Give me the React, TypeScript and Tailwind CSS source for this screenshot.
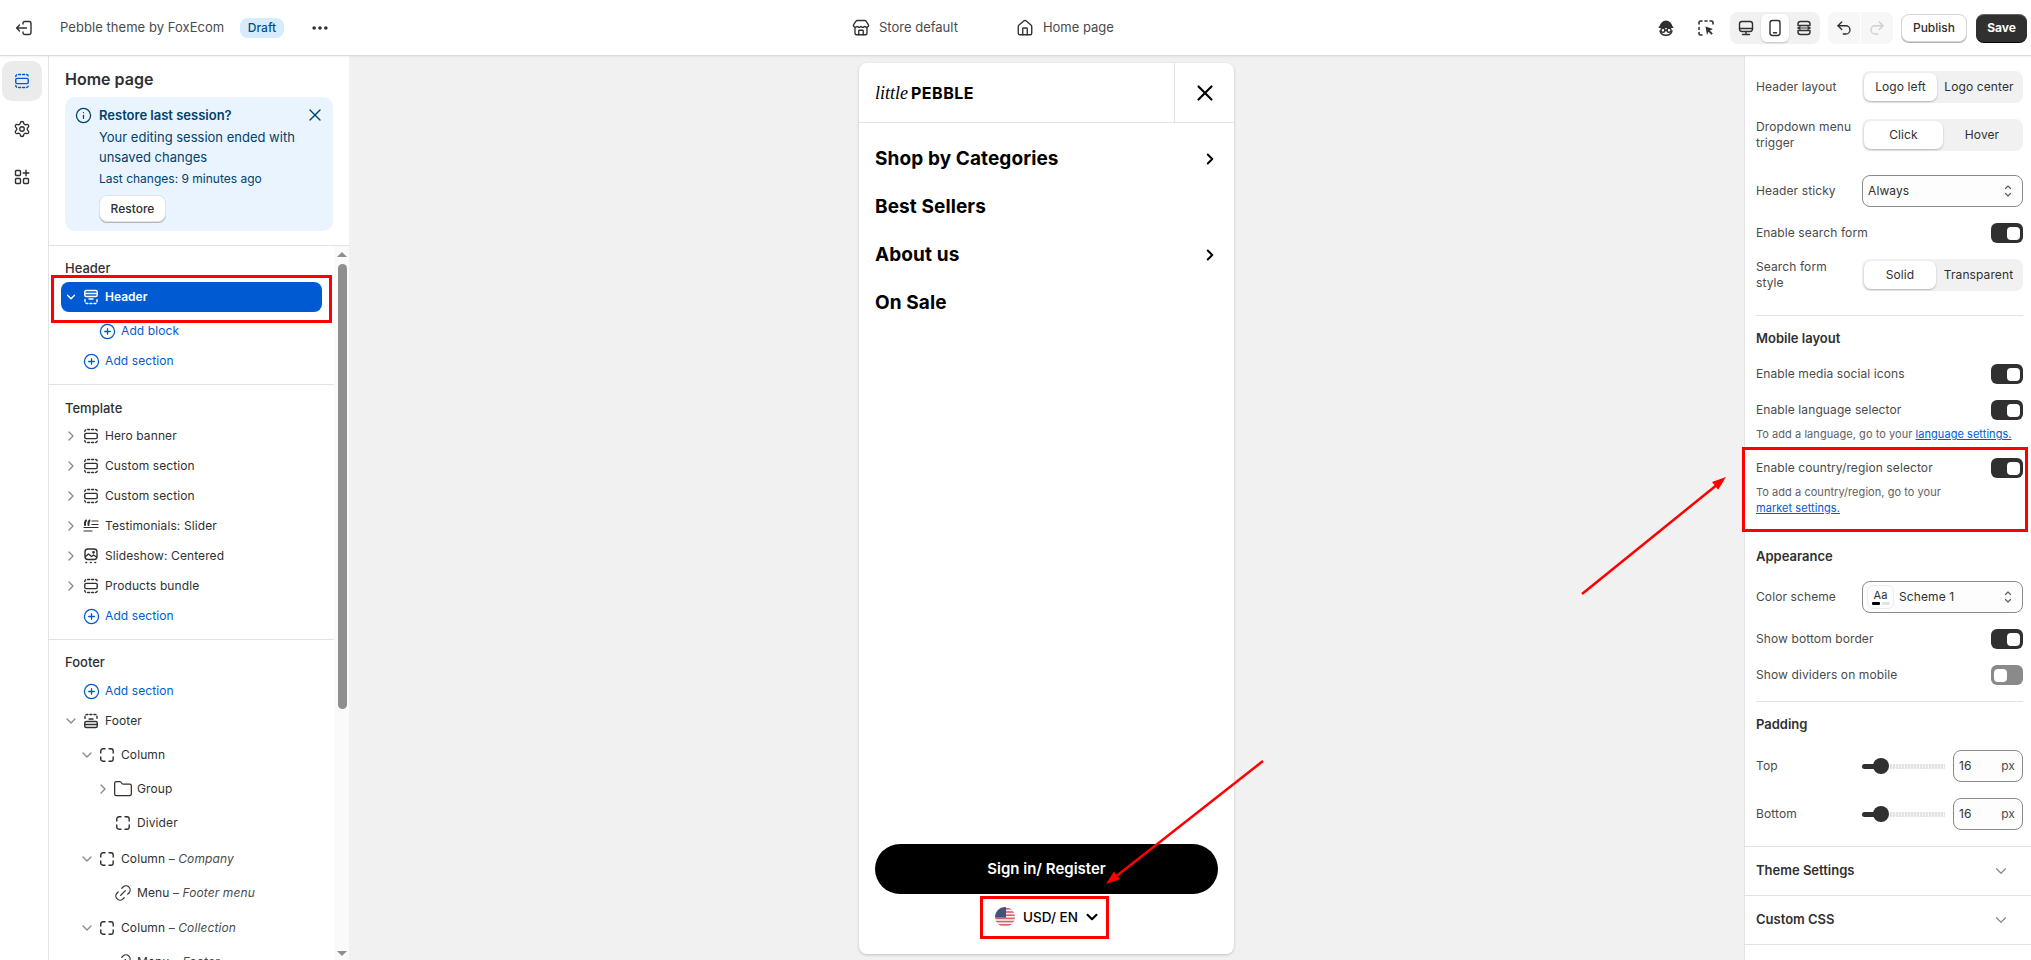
import React from "react";
import { Settings, Store, Home, MoreHorizontal, Undo2, Redo2, Link2, Folder, Info, X, CirclePlus, ChevronRight, ChevronDown } from "lucide-react";

type IP = { className?: string };
const Svg = ({ className, children }: IP & { children: React.ReactNode }) => (
  <svg viewBox="0 0 20 20" fill="none" stroke="currentColor" strokeWidth={1.4} strokeLinecap="round" strokeLinejoin="round" className={className}>{children}</svg>
);
const TOP = "M3.750 5.500c0-1.200.8-2 2-2h8.500c1.200 0 2 .8 2 2";
const BOT = "M3.750 14.500c0 1.200.8 2 2 2h8.500c1.200 0 2-.8 2-2";
const SectionIcon = ({ className }: IP) => (
  <Svg className={className}>
    <path d={TOP} strokeDasharray="2 2" />
    <rect x="3.750" y="7.400" width="12.500" height="5.200" rx="1.400" />
    <path d={BOT} strokeDasharray="2 2" />
  </Svg>
);
const HeaderIcon = ({ className }: IP) => (
  <Svg className={className}>
    <rect x="3.750" y="3.500" width="12.500" height="6" rx="1.500" />
    <path d="M3.750 6.500h12.500" />
    <path d="M4 12.500v2c0 1.200.8 2 2 2h8c1.200 0 2-.8 2-2v-2" strokeDasharray="2 2" />
    <path d="M8 12h4" />
  </Svg>
);
const FooterIcon = ({ className }: IP) => (
  <Svg className={className}>
    <rect x="3.750" y="10.500" width="12.500" height="6" rx="1.500" />
    <path d="M3.750 13.500h12.500" />
    <path d="M4 7.500v-2c0-1.200.8-2 2-2h8c1.200 0 2 .8 2 2v2" strokeDasharray="2 2" />
    <path d="M8 8h4" />
  </Svg>
);
const BlockIcon = ({ className }: IP) => (
  <Svg className={className}>
    <path d="M3.750 8V6a2.200 2.200 0 0 1 2.200-2.200H8M12 3.800h2a2.200 2.200 0 0 1 2.200 2.200v2M16.200 12v2a2.200 2.200 0 0 1-2.200 2.200h-2M8 16.200H6A2.200 2.200 0 0 1 3.750 14v-2" />
  </Svg>
);
const QuoteIcon = ({ className }: IP) => (
  <Svg className={className}>
    <path d="M4 9V6.500l1-2M7.500 9V6.500l1-2" strokeWidth={2} />
    <path d="M11 5h6M11 8.500h6M3 11.500h14M3 15h8" strokeWidth={1.2} />
  </Svg>
);
const SlideIcon = ({ className }: IP) => (
  <Svg className={className}>
    <rect x="4" y="3" width="12" height="10.500" rx="3" />
    <path d="M4.500 10.500 7.500 8l3 2.500 2-1.500 3 2" />
    <circle cx="12.500" cy="6.300" r=".7" />
    <path d="M5 16.500h.6M9.500 16.500h.6M14 16.500h.6" strokeWidth={1.600} />
  </Svg>
);
const ExitIcon = ({ className }: IP) => (
  <Svg className={className}>
    <path d="M9 6v-.8c0-.9.7-1.700 1.700-1.700h4.600c.9 0 1.700.8 1.700 1.700v9.600c0 .9-.8 1.700-1.700 1.700h-4.600c-1 0-1.700-.8-1.700-1.700V14" />
    <path d="M12.500 10H2.800M5.500 7 2.600 10l2.900 3" />
  </Svg>
);
const AppsIcon = ({ className }: IP) => (
  <Svg className={className}>
    <rect x="3.500" y="3.500" width="5" height="5" rx="1" />
    <rect x="3.500" y="11.500" width="5" height="5" rx="1" />
    <rect x="11.500" y="11.500" width="5" height="5" rx="1" />
    <path d="M14 3.200v5.600M11.200 6h5.600" />
  </Svg>
);
const IncognitoIcon = ({ className }: IP) => (
  <Svg className={className}>
    <path d="M4.500 8.800a5.500 5.500 0 0 1 11 0z" fill="currentColor" />
    <path d="M3.500 9.200h13" strokeWidth={1.800} />
    <circle cx="7" cy="12.200" r="2" />
    <circle cx="13" cy="12.200" r="2" />
    <path d="M9 12.200h2M4 13c.6 2.800 3 4.200 6 4.200s5.400-1.400 6-4.200" />
  </Svg>
);
const CursorIcon = ({ className }: IP) => (
  <svg viewBox="0 0 20 20" className={className} fill="currentColor">
    <path d="m9.500 8.500 7.500 2.600-3.200 1.400 3 3-1.300 1.300-3-3L11 17z" />
    <path d="M3 6V4.500C3 3.700 3.700 3 4.500 3H6M3 9.500v2M3 14.500v1c0 .8.7 1.500 1.500 1.500H6M9 3h2M14 3h1.500c.8 0 1.500.7 1.500 1.500V6" fill="none" stroke="currentColor" strokeWidth={1.600} strokeLinecap="round" />
  </svg>
);
const DesktopIcon = ({ className }: IP) => (
  <Svg className={className}>
    <rect x="3.500" y="3.500" width="13" height="10" rx="2.400" />
    <path d="M3.500 10.500h13M10 13.500v3M6.500 16.500h7" />
  </Svg>
);
const PhoneIcon = ({ className }: IP) => (
  <Svg className={className}>
    <rect x="5" y="2.500" width="10" height="15" rx="2.400" />
    <path d="M8.500 14.800h3" />
  </Svg>
);
const FullIcon = ({ className }: IP) => (
  <Svg className={className}>
    <path d="M4 7.500V6a2.500 2.500 0 0 1 2.500-2.500h7A2.500 2.500 0 0 1 16 6v1.500z" />
    <path d="M4 12.500V14a2.500 2.500 0 0 0 2.500 2.500h7A2.500 2.500 0 0 0 16 14v-1.500z" />
    <path d="M3.500 10h13M6 8.700 4 10l2 1.300M14 8.700l2 1.300-2 1.300" strokeWidth={1.200} />
  </Svg>
);
const UpDown = ({ className }: IP) => (
  <Svg className={className}>
    <path d="m7.500 7.500 2.500-2.500 2.500 2.500M7.500 12.500l2.500 2.500 2.500-2.500" strokeWidth={1.200} />
  </Svg>
);

const Flag = () => (
  <svg viewBox="0 0 20 20" className="w-5 h-5 shrink-0">
    <defs><clipPath id="flagc"><circle cx="10" cy="10" r="10" /></clipPath></defs>
    <g clipPath="url(#flagc)">
      <rect width="20" height="20" fill="#f3f3f3" />
      <rect y="1" width="20" height="1.600" fill="#d8626c" />
      <rect y="4.200" width="20" height="1.600" fill="#d8626c" />
      <rect y="7.400" width="20" height="1.600" fill="#d8626c" />
      <rect y="10.600" width="20" height="1.600" fill="#d8626c" />
      <rect y="13.800" width="20" height="1.600" fill="#d8626c" />
      <rect y="17" width="20" height="1.600" fill="#d8626c" />
      <rect width="11" height="10.600" fill="#46507f" />
    </g>
  </svg>
);

const Tree = ({ h = "h-[30px]", pad, chev, icon, name, sub, color = "text-[#8a8a8a]" }: { h?: string; pad: string; chev?: "r" | "d"; icon: React.ReactNode; name: string; sub?: string; color?: string }) => (
  <div className={`flex items-center text-[12px] text-[#303030] ${h} ${pad}`}>
    <span className={`w-4 h-4 shrink-0 ${color}`}>
      {chev === "r" && <ChevronRight className="w-4 h-4" strokeWidth={2} />}
      {chev === "d" && <ChevronDown className="w-4 h-4" strokeWidth={2} />}
    </span>
    <span className="w-5 h-5 ml-[2px] shrink-0 text-[#303030]">{icon}</span>
    <span className="ml-[4px] whitespace-nowrap tracking-[0.1px]">
      {name}
      {sub && <span className="text-[#4a4a4a]"> – <em>{sub}</em></span>}
    </span>
  </div>
);

const Add = ({ label, pad }: { label: string; pad: string }) => (
  <div className={`flex items-center h-[30px] text-[12px] tracking-[0.1px] text-[#005bd3] ${pad}`}>
    <CirclePlus className="w-[17px] h-[17px] shrink-0" strokeWidth={1.800} />
    <span className="ml-[5px]">{label}</span>
  </div>
);

const Toggle = ({ on = true }: { on?: boolean }) => (
  <div className={`w-8 h-5 rounded-[6px] flex items-center px-[3px] ${on ? "bg-[#303030] justify-end" : "bg-[#8a8a8a] justify-start"}`}>
    <div className="w-[13px] h-[13px] rounded-[4px] bg-white" />
  </div>
);

const Seg = ({ a, b, w }: { a: string; b: string; w: string }) => (
  <div className="w-[161px] h-8 rounded-lg bg-[#f1f1f1] p-[2px] flex text-[12px] tracking-[0.1px] text-[#303030] shrink-0">
    <div className={`${w} bg-white rounded-[7px] shadow-[0_1px_2px_rgba(0,0,0,0.25)] flex items-center justify-center`}>{a}</div>
    <div className="flex-1 flex items-center justify-center whitespace-nowrap">{b}</div>
  </div>
);

const Row = ({ label, children, mt, sub }: { label: string; children?: React.ReactNode; mt: string; sub?: boolean }) => (
  <div className={`flex items-center justify-between text-[12px] tracking-[0.1px] text-[#4a4a4a] ${mt}`}>
    <span className={sub ? "w-[96px] leading-4" : "leading-5"}>{label}</span>
    {children}
  </div>
);

const Heading = ({ children, mt }: { children: React.ReactNode; mt: string }) => (
  <div className={`h-5 leading-5 text-[13px] font-semibold text-[#303030] ${mt}`}>{children}</div>
);

const Slider = () => (
  <div className="w-[83px] flex items-center">
    <div className="w-3 h-[5px] bg-[#303030] rounded-l-full" />
    <div className="w-4 h-4 rounded-full bg-[#303030] -ml-[1px] shrink-0" />
    <div className="flex-1 h-[5px] ml-[1px] bg-[repeating-linear-gradient(90deg,#e3e3e3_0_2px,#f4f4f4_2px_3px)]" />
  </div>
);

const PxInput = ({ mt, label }: { mt: string; label: string }) => (
  <div className={`flex items-center text-[12px] tracking-[0.1px] text-[#4a4a4a] ${mt}`}>
    <span className="w-[106px]">{label}</span>
    <Slider />
    <div className="ml-2 w-[70px] h-8 border border-[#8a8a8a] rounded-lg bg-[#fdfdfd] flex items-center justify-between pl-[5px] pr-[7px] text-[#303030]">
      <span>16</span>
      <span className="text-[#4a4a4a]">px</span>
    </div>
  </div>
);

const Accordion = ({ label }: { label: string }) => (
  <div className="h-[49px] border-b border-[#e3e3e3] pl-[11px] pr-[21px] flex items-center justify-between text-[13px] font-semibold text-[#303030]">
    {label}
    <ChevronDown className="w-[18px] h-[18px] text-[#8a8a8a]" strokeWidth={1.600} />
  </div>
);

const MenuRow = ({ label, arrow }: { label: string; arrow?: boolean }) => (
  <div className="h-12 flex items-center justify-between pl-4 pr-[15px] text-[19px] font-bold tracking-[0.1px] text-black">
    <span>{label}</span>
    {arrow && <ChevronRight className="w-[18px] h-[18px]" strokeWidth={2.600} />}
  </div>
);

export default function App() {
  return (
    <div className="relative w-full h-[960px] overflow-hidden bg-white font-[Inter,sans-serif] flex flex-col">
      {/* top bar */}
      <header className="h-[56px] shrink-0 border-b border-[#dcdcdc] shadow-[0_1px_2px_rgba(0,0,0,0.06)] flex items-center relative z-10 bg-white">
        <div className="w-[852px] shrink-0 flex items-center pl-[14px]">
          <ExitIcon className="w-5 h-5 text-[#303030]" />
          <span className="ml-[26px] w-[180px] text-[13px] tracking-[0.05px] text-[#4a4a4a] whitespace-nowrap">Pebble theme by FoxEcom</span>
          <span className="w-[44px] h-5 rounded-lg bg-[#d5ebff] text-[12px] font-medium text-[#00527c] flex items-center justify-center">Draft</span>
          <MoreHorizontal className="ml-[26px] w-5 h-5 text-[#303030]" strokeWidth={2.400} />
        </div>
        <div className="flex items-center text-[13px] text-[#4a4a4a]">
          <Store className="w-[18px] h-[18px] text-[#303030]" strokeWidth={1.800} />
          <span className="ml-[9px]">Store default</span>
          <Home className="ml-[58px] w-[18px] h-[18px] text-[#303030]" strokeWidth={1.800} />
          <span className="ml-[9px]">Home page</span>
        </div>
        <div className="flex-1" />
        <div className="flex items-center pr-[4px]">
          <IncognitoIcon className="w-5 h-5 text-[#303030]" />
          <CursorIcon className="ml-5 w-5 h-5 text-[#303030]" />
          <div className="ml-[14px] w-[90px] h-8 rounded-lg bg-[#f1f1f1] flex items-center justify-between px-[2px] text-[#303030]">
            <div className="w-7 h-7 flex items-center justify-center"><DesktopIcon className="w-5 h-5" /></div>
            <div className="w-7 h-7 rounded-md bg-white shadow-[0_1px_2px_rgba(0,0,0,0.2)] flex items-center justify-center"><PhoneIcon className="w-5 h-5" /></div>
            <div className="w-7 h-7 flex items-center justify-center"><FullIcon className="w-5 h-5" /></div>
          </div>
          <div className="ml-2 w-[65px] h-8 rounded-lg bg-[#f7f7f7] flex items-center">
            <div className="flex-1 h-8 flex items-center justify-center border-r border-white"><Undo2 className="w-[18px] h-[18px] text-[#303030]" strokeWidth={1.800} /></div>
            <div className="flex-1 h-8 flex items-center justify-center"><Redo2 className="w-[18px] h-[18px] text-[#cfcfcf]" strokeWidth={1.800} /></div>
          </div>
          <div className="ml-2 w-[66px] h-7 rounded-lg border border-[#d4d4d4] shadow-[0_1px_0_#b5b5b5] bg-white text-[12px] font-medium text-[#303030] flex items-center justify-center">Publish</div>
          <div className="ml-[9px] w-[51px] h-7 rounded-lg bg-[#303030] shadow-[0_1px_0_#000,inset_0_1px_0_rgba(255,255,255,0.25)] text-[12px] font-bold text-white flex items-center justify-center">Save</div>
        </div>
      </header>

      <div className="flex-1 flex min-h-0">
        {/* rail */}
        <nav className="w-[49px] shrink-0 border-r border-[#e3e3e3] flex flex-col items-start pl-[2px] pt-[5px] text-[#303030]">
          <div className="w-10 h-10 rounded-[10px] bg-[#ebebeb] flex items-center justify-center text-[#005bd3]"><SectionIcon className="w-5 h-5" /></div>
          <div className="w-10 h-12 mt-1 flex items-center justify-center"><Settings className="w-[18px] h-[18px]" strokeWidth={1.800} /></div>
          <div className="w-10 h-12 flex items-center justify-center"><AppsIcon className="w-5 h-5" /></div>
        </nav>

        {/* left panel */}
        <aside className="w-[300px] shrink-0 flex flex-col min-h-0">
          <div className="h-[190px] shrink-0 border-b border-[#e3e3e3] pl-4 pr-4 pt-[13px]">
            <h1 className="h-5 leading-5 text-[16px] font-semibold text-[#303030]">Home page</h1>
            <div className="mt-2 w-[268px] h-[134px] rounded-[10px] bg-[#eaf4ff] flex pl-[10px] pr-2 pt-2 text-[#00426a]">
              <Info className="w-[17px] h-[17px] mt-[2px] shrink-0" strokeWidth={1.800} />
              <div className="ml-[7px] flex-1">
                <div className="h-5 leading-5 text-[13px] font-semibold">Restore last session?</div>
                <div className="mt-[2px] text-[13px] leading-5">Your editing session ended with<br />unsaved changes</div>
                <div className="mt-1 h-4 leading-4 text-[12px]">Last changes: 9 minutes ago</div>
                <div className="mt-2 w-[67px] h-[27px] rounded-lg bg-white border border-[#e3e3e3] shadow-[0_1px_0_#b5b5b5] text-[12px] text-[#303030] font-medium flex items-center justify-center">Restore</div>
              </div>
              <X className="w-5 h-5 shrink-0" strokeWidth={1.600} />
            </div>
          </div>

          <div className="flex-1 flex min-h-0">
            <div className="flex-1 min-w-0 overflow-hidden">
              <div className="border-b border-[#e3e3e3] pb-2 pt-3">
                <div className="h-5 leading-5 pl-4 text-[13px] font-medium text-[#303030]">Header</div>
                <div className="mt-1 ml-3 w-[261px] h-[30px] rounded-lg bg-[#005bd3] flex items-center pl-[3px] text-[12px] font-semibold text-white">
                  <ChevronDown className="w-[14px] h-[14px]" strokeWidth={2.400} />
                  <HeaderIcon className="w-5 h-5 ml-[3px]" />
                  <span className="ml-[4px]">Header</span>
                </div>
                <div className="mt-1"><Add label="Add block" pad="pl-[50px]" /></div>
                <Add label="Add section" pad="pl-[34px]" />
              </div>

              <div className="border-b border-[#e3e3e3] pt-[13px] pb-2">
                <div className="h-5 leading-5 pl-4 text-[13px] font-medium text-[#303030]">Template</div>
                <div className="mt-[3px]">
                  <Tree pad="pl-[14px]" chev="r" icon={<SectionIcon className="w-5 h-5" />} name="Hero banner" />
                  <Tree pad="pl-[14px]" chev="r" icon={<SectionIcon className="w-5 h-5" />} name="Custom section" />
                  <Tree pad="pl-[14px]" chev="r" icon={<SectionIcon className="w-5 h-5" />} name="Custom section" />
                  <Tree pad="pl-[14px]" chev="r" icon={<QuoteIcon className="w-5 h-5" />} name="Testimonials: Slider" />
                  <Tree pad="pl-[14px]" chev="r" icon={<SlideIcon className="w-5 h-5" />} name="Slideshow: Centered" />
                  <Tree pad="pl-[14px]" chev="r" icon={<SectionIcon className="w-5 h-5" />} name="Products bundle" />
                  <Add label="Add section" pad="pl-[34px]" />
                </div>
              </div>

              <div className="pt-3">
                <div className="h-5 leading-5 pl-4 text-[13px] font-medium text-[#303030]">Footer</div>
                <div className="mt-1">
                  <Add label="Add section" pad="pl-[34px]" />
                  <Tree pad="pl-[14px]" chev="d" icon={<FooterIcon className="w-5 h-5" />} name="Footer" />
                  <div className="mt-[2px]" />
                  <Tree h="h-[34px]" pad="pl-[30px]" chev="d" icon={<BlockIcon className="w-5 h-5" />} name="Column" />
                  <Tree h="h-[34px]" pad="pl-[46px]" chev="r" icon={<Folder className="w-5 h-5" strokeWidth={1.500} />} name="Group" />
                  <Tree h="h-[34px]" pad="pl-[46px]" icon={<BlockIcon className="w-5 h-5" />} name="Divider" />
                  <div className="mt-[2px]" />
                  <Tree h="h-[34px]" pad="pl-[30px]" chev="d" icon={<BlockIcon className="w-5 h-5" />} name="Column" sub="Company" />
                  <Tree h="h-[34px]" pad="pl-[46px]" icon={<Link2 className="w-5 h-5 -rotate-45" strokeWidth={1.500} />} name="Menu" sub="Footer menu" />
                  <div className="mt-[1px]" />
                  <Tree h="h-[34px]" pad="pl-[30px]" chev="d" icon={<BlockIcon className="w-5 h-5" />} name="Column" sub="Collection" />
                  <Tree h="h-[34px]" pad="pl-[46px]" icon={<Link2 className="w-5 h-5 -rotate-45" strokeWidth={1.500} />} name="Menu" sub="Footer" />
                </div>
              </div>
            </div>
            <div className="w-[15px] shrink-0 bg-[#fafafa] flex flex-col items-center pt-[6px] pb-[4px] pl-[1px]">
              <div className="w-0 h-0 border-x-[5px] border-x-transparent border-b-[5px] border-b-[#8f8f8f]" />
              <div className="w-[9px] h-[445px] mt-[7px] rounded-full bg-[#8f8f8f]" />
              <div className="flex-1" />
              <div className="w-0 h-0 border-x-[5px] border-x-transparent border-t-[5px] border-t-[#8f8f8f]" />
            </div>
          </div>
        </aside>

        {/* preview */}
        <main className="flex-1 min-w-0 bg-[#f1f1f1] flex justify-center pt-[7px]">
          <div className="w-[375px] h-[891px] rounded-lg bg-white shadow-[0_1px_3px_rgba(0,0,0,0.2)] flex flex-col">
            <div className="h-[60px] shrink-0 border-b border-[#e3e3e3] flex">
              <div className="flex-1 flex items-center pl-4 text-black">
                <span className="font-['Liberation_Serif',serif] italic text-[18px] leading-none w-[36px]">little</span>
                <span className="text-[16px] font-bold tracking-[0.5px]">PEBBLE</span>
              </div>
              <div className="w-[60px] border-l border-[#e3e3e3] flex items-center justify-center">
                <X className="w-[26px] h-[26px] text-black" strokeWidth={2} />
              </div>
            </div>
            <div className="pt-3">
              <MenuRow label="Shop by Categories" arrow />
              <MenuRow label="Best Sellers" />
              <MenuRow label="About us" arrow />
              <MenuRow label="On Sale" />
            </div>
            <div className="flex-1" />
            <div className="mx-4 h-[50px] rounded-full bg-black text-white text-[15px] font-semibold flex items-center justify-center">Sign in/ Register</div>
            <div className="mt-[13px] mb-[27px] h-5 flex items-center justify-center pl-[3px] text-[13.5px] font-medium text-black">
              <Flag />
              <span className="ml-2">USD/ EN</span>
              <ChevronDown className="ml-[5px] w-[18px] h-[18px]" strokeWidth={2.800} />
            </div>
          </div>
        </main>

        {/* right panel */}
        <aside className="w-[287px] shrink-0 border-l border-[#e3e3e3] flex flex-col min-h-0">
          <div className="pl-[11px] pr-2 pt-[15px]">
            <Row label="Header layout" mt=""><Seg a="Logo left" b="Logo center" w="w-[73px]" /></Row>
            <Row label="Dropdown menu trigger" mt="mt-4" sub><Seg a="Click" b="Hover" w="w-[79px]" /></Row>
            <Row label="Header sticky" mt="mt-6">
              <div className="w-[161px] h-8 border border-[#8a8a8a] rounded-lg bg-[#fdfdfd] flex items-center justify-between pl-[5px] pr-1 text-[#303030]">
                Always
                <UpDown className="w-5 h-5 text-[#616161]" />
              </div>
            </Row>
            <Row label="Enable search form" mt="mt-4"><Toggle /></Row>
            <Row label="Search form style" mt="mt-4" sub><Seg a="Solid" b="Transparent" w="w-[72px]" /></Row>
            <div className="mt-6 border-t border-[#e3e3e3]" />
            <Heading mt="mt-3">Mobile layout</Heading>
            <Row label="Enable media social icons" mt="mt-4"><Toggle /></Row>
            <Row label="Enable language selector" mt="mt-4"><Toggle /></Row>
            <p className="mt-[6px] h-4 leading-4 text-[11px] tracking-[0.05px] text-[#616161] whitespace-nowrap">To add a language, go to your <span className="text-[#005bd3] underline">language settings.</span></p>
            <Row label="Enable country/region selector" mt="mt-4"><Toggle /></Row>
            <p className="mt-[6px] leading-4 text-[11px] tracking-[0.05px] text-[#616161]">To add a country/region, go to your<br /><span className="text-[#005bd3] underline">market settings.</span></p>
            <Heading mt="mt-[30px]">Appearance</Heading>
            <Row label="Color scheme" mt="mt-[15px]">
              <div className="w-[161px] h-8 border border-[#8a8a8a] rounded-lg bg-[#fdfdfd] flex items-center justify-between pl-1 pr-1 text-[#303030]">
                <div className="flex items-center">
                  <div className="w-[27px] h-6 rounded-md border border-[#ececec] flex flex-col items-center justify-center">
                    <span className="text-[11px] leading-[12px] text-[#303030]">Aa</span>
                    <span className="flex gap-[2px] mt-[1px]">
                      <span className="w-2 h-[3px] rounded-[1px] bg-black" />
                      <span className="w-2 h-[3px] rounded-[1px] bg-[#e3e3e3]" />
                    </span>
                  </div>
                  <span className="ml-[5px]">Scheme 1</span>
                </div>
                <UpDown className="w-5 h-5 text-[#616161]" />
              </div>
            </Row>
            <Row label="Show bottom border" mt="mt-4"><Toggle /></Row>
            <Row label="Show dividers on mobile" mt="mt-4"><Toggle on={false} /></Row>
            <div className="mt-4 border-t border-[#e3e3e3]" />
            <Heading mt="mt-3">Padding</Heading>
            <PxInput mt="mt-4" label="Top" />
            <PxInput mt="mt-4" label="Bottom" />
          </div>
          <div className="mt-4 border-t border-[#e3e3e3]">
            <Accordion label="Theme Settings" />
            <Accordion label="Custom CSS" />
          </div>
        </aside>
      </div>

      {/* red annotations */}
      <div className="absolute left-[51px] top-[275px] w-[281px] h-[48px] border-[3px] border-[#ff0000] pointer-events-none" />
      <div className="absolute left-[1742px] top-[447px] w-[286px] h-[85px] border-[3px] border-[#ff0000] pointer-events-none" />
      <div className="absolute left-[980px] top-[896px] w-[129px] h-[43px] border-[3px] border-[#ff0000] pointer-events-none" />
      <svg className="absolute left-0 top-0 w-[2031px] h-[960px] pointer-events-none" viewBox="0 0 2031 960">
        <line x1="1582" y1="594" x2="1718" y2="484" stroke="#ff0000" strokeWidth="2.500" />
        <polygon points="1726,477 1718.200,489.700 1712,481.900" fill="#ff0000" />
        <line x1="1263" y1="761" x2="1114" y2="878" stroke="#ff0000" strokeWidth="2.500" />
        <polygon points="1106,884 1120.100,879.300 1113.900,871.500" fill="#ff0000" />
      </svg>
    </div>
  );
}
